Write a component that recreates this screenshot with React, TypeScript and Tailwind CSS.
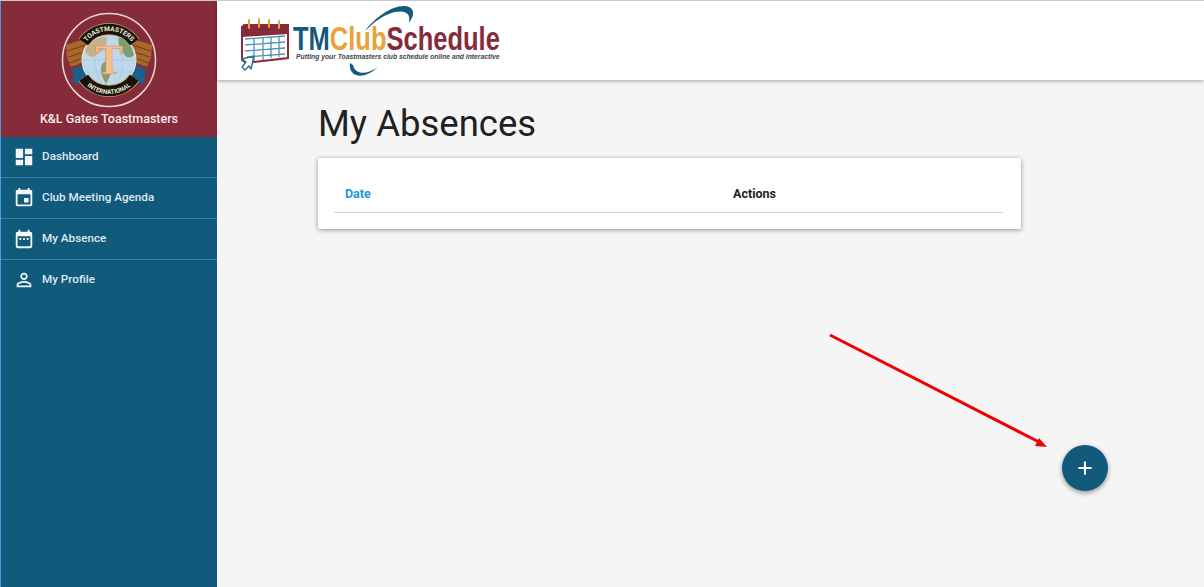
import { Plus } from "lucide-react";

const navItems = [
  {
    label: "Dashboard",
    icon: "M3 13h8V3H3v10zm0 8h8v-6H3v6zm10 0h8V11h-8v10zm0-18v6h8V3h-8z",
  },
  {
    label: "Club Meeting Agenda",
    icon: "M17 12h-5v5h5v-5zM16 1v2H8V1H6v2H5c-1.11 0-1.99.9-1.99 2L3 19c0 1.1.89 2 2 2h14c1.1 0 2-.9 2-2V5c0-1.1-.9-2-2-2h-1V1h-2zm3 18H5V8h14v11z",
  },
  {
    label: "My Absence",
    icon: "M7 11h2v2H7v-2zm4 0h2v2h-2v-2zm4 0h2v2h-2v-2zM19 4h-1V2h-2v2H8V2H6v2H5c-1.11 0-1.99.9-1.99 2L3 20c0 1.1.89 2 2 2h14c1.1 0 2-.9 2-2V6c0-1.1-.9-2-2-2zm0 16H5V9h14v11z",
  },
  {
    label: "My Profile",
    icon: "M12 5.9a2.1 2.1 0 1 1 0 4.2 2.1 2.1 0 0 1 0-4.2m0 9c2.97 0 6.1 1.46 6.1 2.1v1.1H5.9V17c0-.64 3.13-2.1 6.1-2.1M12 4C9.79 4 8 5.79 8 8s1.79 4 4 4 4-1.79 4-4-1.79-4-4-4zm0 9c-2.67 0-8 1.34-8 4v3h16v-3c0-2.66-5.33-4-8-4z",
  },
];

function ToastmastersLogo() {
  return (
    <svg width="96" height="96" viewBox="0 0 96 96">
      <defs>
        <path id="tm-top" d="M19 48a29 29 0 0 1 58 0" />
        <path id="tm-bottom" d="M14 48a34 34 0 0 0 68 0" />
      </defs>
      <circle cx="48" cy="48" r="46.5" fill="#862b3a" stroke="#e9d8d8" strokeWidth="1.5" />
      {/* gavels */}
      <path d="M5 33l19-6 4 21-18 7-4-9z" fill="#a8672d" />
      <path d="M6 39l19-6M7 45l19-6M8 51l18-6" stroke="#6e3f1a" strokeWidth="1" />
      <path d="M91 33l-19-6-4 21 18 7 4-9z" fill="#a8672d" />
      <path d="M90 39l-19-6M89 45l-19-6M88 51l-18-6" stroke="#6e3f1a" strokeWidth="1" />
      {/* ribbons */}
      <path d="M11 57l14-5 5 19-8 4-3-4-6 1z" fill="#1c5e8c" />
      <path d="M85 57l-14-5-5 19 8 4 3-4 6 1z" fill="#1c5e8c" />
      {/* globe */}
      <circle cx="48" cy="48" r="27" fill="#bcd8ea" stroke="#f1ecd9" strokeWidth="1" />
      <ellipse cx="48" cy="48" rx="14" ry="27" fill="none" stroke="#9cc0d8" strokeWidth=".5" />
      <path d="M21 48h54M24 36h48M24 60h48" stroke="#9cc0d8" strokeWidth=".5" />
      <path d="M24 38c5-9 13-13 21-13 3 5-2 9-3 14-5 1-6 6-11 6-3-1-6-3-7-7z" fill="#c7b08c" />
      <path d="M58 25c8 3 13 9 15 18-4 4-8 3-10-1-3-4-7-11-5-17z" fill="#7f9c74" />
      <path d="M44 50c5 0 8 3 7 7-1 5-4 11-6 15-3-5-5-10-5-14 0-4 1-7 4-8z" fill="#8a9a6c" />
      <text x="48" y="62" textAnchor="middle" fontFamily="'Liberation Serif', serif" fontSize="42" fontWeight="700" fill="#f3c08e" stroke="#d98d54" strokeWidth=".5">
        T
      </text>
      {/* name bands */}
      <path d="M22.6 30.2A31 31 0 0 1 73.4 30.2" fill="none" stroke="#c9a35c" strokeWidth="12" />
      <path d="M22.6 30.2A31 31 0 0 1 73.4 30.2" fill="none" stroke="#17140f" strokeWidth="10.4" />
      <path d="M22.6 65.8A31 31 0 0 0 73.4 65.8" fill="none" stroke="#c9a35c" strokeWidth="12" />
      <path d="M22.6 65.8A31 31 0 0 0 73.4 65.8" fill="none" stroke="#17140f" strokeWidth="10.4" />
      <text fontFamily="Roboto, sans-serif" fontSize="6.6" fontWeight="700" fill="#f3ecd9">
        <textPath href="#tm-top" startOffset="50%" textAnchor="middle">TOASTMASTERS</textPath>
      </text>
      <text fontFamily="Roboto, sans-serif" fontSize="6.2" fontWeight="700" fill="#f3ecd9">
        <textPath href="#tm-bottom" startOffset="50%" textAnchor="middle">INTERNATIONAL</textPath>
      </text>
    </svg>
  );
}

function CalendarLogo() {
  return (
    <svg width="48" height="54" viewBox="0 0 48 54" className="mt-[11px] ml-[1px] shrink-0 self-start">
      <path d="M1 9l46-2v33L5 45 1 42z" fill="#fff" stroke="#862b3a" strokeWidth="2" />
      <path d="M1 9c0-2 1-3 3-3h40c2 0 3 1 3 3v7L1 19z" fill="#862b3a" />
      <path d="M8 2v8M18 1v8M28 2v7M38 3v7" stroke="#e8a33d" strokeWidth="2" strokeLinecap="round" />
      <path d="M4 21l40-3M4 27l40-3M4 33l40-3M6 39l38-3M13 20v23M22 20v22M30 19v21M38 18v21" stroke="#4f93b2" strokeWidth="1.3" fill="none" />
      <path d="M13 38L1 41l4 3-4 5 3 3 4-4 2 3z" fill="#fff" stroke="#2f7497" strokeWidth="1.5" strokeLinejoin="round" />
    </svg>
  );
}

function AppLogo() {
  return (
    <div className="relative flex h-[67px] w-[262px] items-start">
      {/* swoosh around the wordmark */}
      <svg className="absolute left-[105px] top-[-2px]" width="75" height="80" viewBox="0 0 75 80">
        <path d="M20 26C30 12 48 0 60 1c10 1 10 9 4 17 2-10-4-13-14-11-10 2-20 9-30 19z" fill="#155a7c" />
        <path d="M5 58c-2 14 13 18 28 4-11 8-23 8-25-2z" fill="#155a7c" />
      </svg>
      <CalendarLogo />
      <div className="relative ml-[4px] mt-[17px] flex flex-col">
        <div className="origin-left scale-x-[0.75] whitespace-nowrap font-['Liberation_Sans',sans-serif] text-[34px] leading-[28px] font-bold">
          <span className="text-[#155a7c]">TM</span>
          <span className="text-[#e8a33d]">Club</span>
          <span className="text-[#862b3a]">Schedule</span>
        </div>
        <div className="ml-[3px] origin-left scale-x-[0.965] whitespace-nowrap font-['Liberation_Sans',sans-serif] text-[7px] leading-[9px] font-bold italic text-[#444]">
          Putting your Toastmasters club schedule online and interactive
        </div>
      </div>
    </div>
  );
}

export default function App() {
  return (
    <div className="flex h-[587px] w-[1204px] overflow-hidden border-t border-t-[#c8c8c8] bg-[#f5f5f5] font-['Roboto',sans-serif]">
      <aside className="flex w-[217px] shrink-0 flex-col border-l border-l-[#4a9de0] bg-[#115a7c]">
        <div className="flex h-[136px] flex-col items-center bg-[#862b3a] pt-[11px]">
          <ToastmastersLogo />
          <div className="mt-[2px] text-[12.5px] leading-[18px] font-medium text-[#f5eaea]">
            K&amp;L Gates Toastmasters
          </div>
        </div>
        <nav className="flex flex-col">
          {navItems.map((item) => (
            <a
              key={item.label}
              className="flex h-[41px] items-center border-b border-b-[#2a86b3] pl-[12px] last:border-b-transparent"
            >
              <svg width="22" height="22" viewBox="0 0 24 24" fill="#f2f6f8" className="shrink-0">
                <path d={item.icon} />
              </svg>
              <span className="ml-[7px] text-[11.7px] font-medium text-[#dfe9ee]">{item.label}</span>
            </a>
          ))}
        </nav>
      </aside>

      <div className="relative flex min-w-0 flex-1 flex-col">
        <header className="flex h-[79px] shrink-0 items-center bg-white pl-[23px] shadow-[0_1px_4px_rgba(0,0,0,0.35)]">
          <AppLogo />
        </header>
        <main className="pl-[101px]">
          <h1 className="mt-[21px] text-[36.5px] leading-[46px] font-normal text-[#212121]">My Absences</h1>
          <div className="mt-[11px] flex h-[71px] w-[703px] flex-col rounded-[2px] bg-white pl-[16px] pr-[18px] shadow-[0_1px_5px_rgba(0,0,0,0.4)]">
            <div className="flex h-[55px] items-end border-b border-b-[#d5d5d5] pb-[8px] text-[12.5px] font-bold">
              <span className="w-[399px] pl-[11px] text-[#2196e3]">Date</span>
              <span className="text-[#222]">Actions</span>
            </div>
          </div>
        </main>

        {/* annotation arrow */}
        <svg className="absolute left-[612px] top-[332px]" width="225" height="118" viewBox="0 0 225 118" fill="none">
          <path d="M1 2l211 108" stroke="#f00000" strokeWidth="3" />
          <path d="M218 114l-12-1 4-8z" fill="#f00000" />
        </svg>

        <button className="absolute left-[845px] top-[444px] flex h-[46px] w-[46px] items-center justify-center rounded-full bg-[#115a7c] text-white shadow-[0_2px_5px_rgba(0,0,0,0.4)]">
          <Plus size={20} strokeWidth={2.5} />
        </button>
      </div>
    </div>
  );
}
